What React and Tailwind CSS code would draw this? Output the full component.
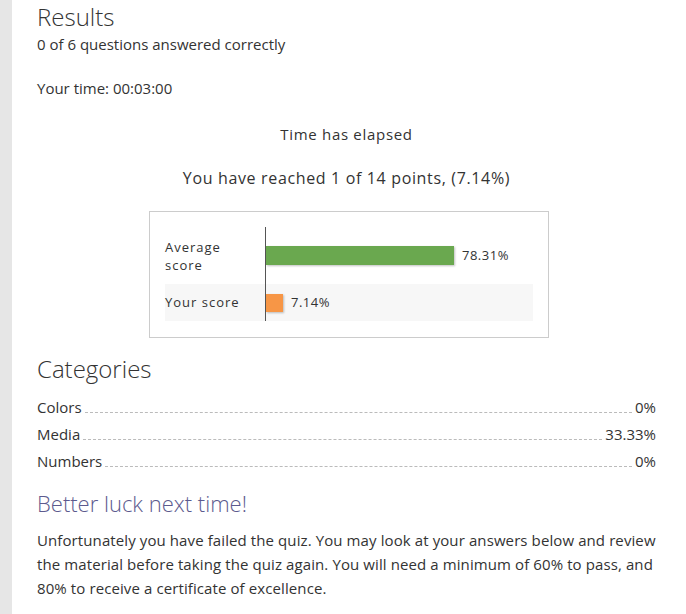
import React from "react";

const categories = [
  { name: "Colors", value: "0%" },
  { name: "Media", value: "33.33%" },
  { name: "Numbers", value: "0%" },
];

function ScoreChart() {
  return (
    <div className="ml-[112px] w-[400px] border border-[#cccccc] px-[15px] pt-[15px] pb-[16px]">
      <div className="flex flex-col">
        <div className="flex h-[57px] items-center">
          <div className="w-[100px] text-[13px] leading-[18px] tracking-[1px] text-[#333]">
            Average
            <br />
            score
          </div>
          <div className="flex h-full items-center border-l border-[#555]">
            <div className="h-[19px] w-[188px] bg-[#6aa84f] shadow-[1px_1px_2px_rgba(0,0,0,0.25)]" />
            <span className="ml-[8px] text-[13px] tracking-[0.5px] text-[#333]">78.31%</span>
          </div>
        </div>
        <div className="flex h-[37px] items-center bg-[#f7f7f7]">
          <div className="w-[100px] text-[13px] tracking-[1px] text-[#333]">Your score</div>
          <div className="flex h-full items-center border-l border-[#555]">
            <div className="h-[18px] w-[17px] bg-[#f79646] shadow-[1px_1px_2px_rgba(0,0,0,0.25)]" />
            <span className="ml-[8px] text-[13px] tracking-[0.5px] text-[#333]">7.14%</span>
          </div>
        </div>
      </div>
    </div>
  );
}

export default function App() {
  return (
    <div className="flex min-h-screen bg-white font-['Open_Sans',sans-serif] text-[#333]">
      <div className="w-[12px] shrink-0 bg-[#e6e6e6]" />
      <main className="flex-1 pl-[25px] pr-[30px]">
        <h2 className="mt-[2px] text-[24px] font-light leading-[30px] text-[#333]">Results</h2>
        <p className="text-[15px] leading-[24px]">0 of 6 questions answered correctly</p>
        <p className="mt-[20px] text-[15px] leading-[24px]">Your time: 00:03:00</p>

        <p className="mt-[22px] text-center text-[15px] leading-[24px] tracking-[0.7px]">
          Time has elapsed
        </p>
        <p className="mt-[20px] text-center text-[16px] leading-[24px] tracking-[0.65px]">
          You have reached 1 of 14 points, (7.14%)
        </p>

        <div className="mt-[21px]">
          <ScoreChart />
        </div>

        <h2 className="mt-[16px] text-[24px] font-light leading-[30px]">Categories</h2>
        <div className="mt-[10px] flex flex-col">
          {categories.map((c) => (
            <div key={c.name} className="flex h-[27px] items-center text-[15px]">
              <span>{c.name}</span>
              <span className="mx-[3px] mt-[9px] flex-1 border-b border-dashed border-[#bbb]" />
              <span>{c.value}</span>
            </div>
          ))}
        </div>

        <h3 className="mt-[13px] text-[22px] font-light leading-[30px] text-[#5c5a8e]">
          Better luck next time!
        </h3>
        <p className="mt-[10px] text-[15px] leading-[24px] tracking-[0.1px]">
          Unfortunately you have failed the quiz. You may look at your answers below and review the
          material before taking the quiz again. You will need a minimum of 60% to pass, and 80% to
          receive a certificate of excellence.
        </p>
      </main>
    </div>
  );
}
